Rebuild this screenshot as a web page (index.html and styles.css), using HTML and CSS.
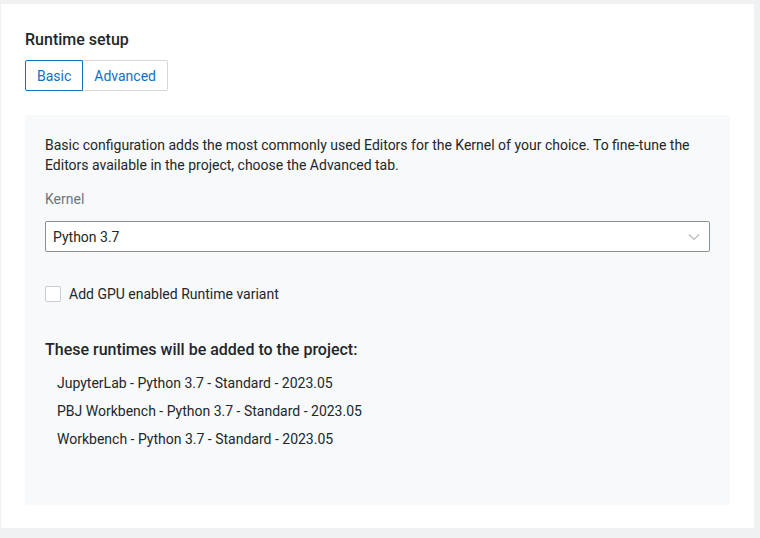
FILE: index.html
```html
<!DOCTYPE html>
<html>
<head>
<meta charset="utf-8">
<link rel="stylesheet" href="styles.css">
</head>
<body>
<div class="card">
  <h2 class="title">Runtime setup</h2>
  <div class="tabs">
    <button class="tab active">Basic</button>
    <button class="tab">Advanced</button>
  </div>
  <div class="panel">
    <p class="desc">Basic configuration adds the most commonly used Editors for the Kernel of your choice. To fine-tune the Editors available in the project, choose the Advanced tab.</p>
    <label class="label">Kernel</label>
    <div class="select">
      <span>Python 3.7</span>
      <svg class="chev" width="12" height="8" viewBox="0 0 12 8"><path d="M1 1.5 L6 6.5 L11 1.5" fill="none" stroke="#b5b9bf" stroke-width="1.2"/></svg>
    </div>
    <div class="check-row">
      <span class="checkbox"></span>
      <span>Add GPU enabled Runtime variant</span>
    </div>
    <h3 class="subhead">These runtimes will be added to the project:</h3>
    <ul class="list">
      <li>JupyterLab - Python 3.7 - Standard - 2023.05</li>
      <li>PBJ Workbench - Python 3.7 - Standard - 2023.05</li>
      <li>Workbench - Python 3.7 - Standard - 2023.05</li>
    </ul>
  </div>
</div>
</body>
</html>
```
FILE: styles.css
```css
html, body {
  margin: 0;
  padding: 0;
  background: #f0f1f3;
  font-family: Roboto, "Liberation Sans", sans-serif;
  color: #21272a;
}
body {
  padding: 4px 6px 10px 1px;
  height: 538px;
  box-sizing: border-box;
}
.card {
  background: #fff;
  height: 524px;
  box-sizing: border-box;
  padding: 27px 24px 23px 24px;
  display: flex;
  flex-direction: column;
}
.title {
  margin: 0;
  font-size: 16px;
  font-weight: 500;
  line-height: 18px;
}
.tabs {
  display: flex;
  margin-top: 11px;
}
.tab {
  font-family: inherit;
  font-size: 14px;
  color: #0a72c9;
  background: #fff;
  border: 1px solid #d4d7dc;
  height: 31px;
  padding: 0 11px;
  margin: 0;
  cursor: pointer;
}
.tab.active {
  border-color: #0a72c9;
  border-radius: 2px 0 0 2px;
}
.tab:last-child {
  border-left: none;
  border-radius: 0 2px 2px 0;
}
.panel {
  margin-top: 24px;
  background: #f8f9fb;
  flex: 1;
  padding: 20px 20px;
}
.desc {
  margin: 0;
  font-size: 14px;
  line-height: 20px;
  color: #21272a;
}
.label {
  display: block;
  margin-top: 16px;
  font-size: 14px;
  line-height: 16px;
  color: #6f747b;
}
.select {
  margin-top: 14px;
  height: 31px;
  box-sizing: border-box;
  background: #fff;
  border: 1px solid #8a9099;
  border-radius: 2px;
  display: flex;
  align-items: center;
  justify-content: space-between;
  padding: 0 9px 0 7px;
  font-size: 14px;
}
.check-row {
  display: flex;
  align-items: center;
  gap: 8px;
  margin-top: 34px;
  font-size: 14px;
}
.checkbox {
  width: 16px;
  height: 16px;
  box-sizing: border-box;
  border: 1px solid #c9ccd1;
  border-radius: 2px;
  background: #fff;
}
.subhead {
  margin: 38px 0 0 0;
  font-size: 16px;
  font-weight: 500;
  line-height: 20px;
}
.list {
  list-style: none;
  margin: 15px 0 0 0;
  padding: 0 0 0 12px;
  font-size: 14px;
}
.list li {
  line-height: 16px;
  margin-bottom: 12px;
}
```
